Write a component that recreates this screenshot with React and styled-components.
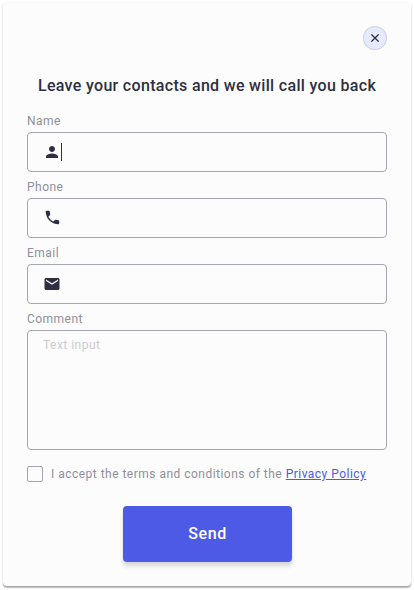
import React from "react";
import styled, { createGlobalStyle } from "styled-components";

const GlobalStyle = createGlobalStyle`
  *, *::before, *::after { box-sizing: border-box; }
  body {
    margin: 0;
    background: #fff;
    font-family: Roboto, sans-serif;
    color: #2e2f42;
  }
`;

const Page = styled.main`
  padding: 2px 3px 4px;
`;

const Modal = styled.section`
  position: relative;
  width: 408px;
  height: 584px;
  padding: 72px 24px 24px;
  border-radius: 4px;
  background: #fcfcfc;
  box-shadow: 0 1px 1px rgba(0, 0, 0, 0.14), 0 1px 3px rgba(0, 0, 0, 0.12),
    0 2px 1px rgba(0, 0, 0, 0.2);
`;

const CloseButton = styled.button`
  position: absolute;
  top: 24px;
  right: 24px;
  display: flex;
  align-items: center;
  justify-content: center;
  width: 24px;
  height: 24px;
  padding: 0;
  border: 1px solid rgba(0, 0, 0, 0.1);
  border-radius: 50%;
  background: #e7e9fc;
  color: #2e2f42;
`;

const Title = styled.h2`
  margin: 0 0 16px;
  font-size: 16px;
  font-weight: 500;
  line-height: 24px;
  letter-spacing: 0.02em;
  text-align: center;
  white-space: nowrap;
`;

const Form = styled.form`
  display: flex;
  flex-direction: column;
`;

const Field = styled.label`
  display: flex;
  flex-direction: column;
  gap: 4px;
  margin-bottom: ${({ $last }) => ($last ? "16px" : "8px")};
`;

const LabelText = styled.span`
  font-size: 12px;
  line-height: 14px;
  letter-spacing: 0.04em;
  color: #8e8f99;
`;

const InputBox = styled.span`
  display: flex;
  align-items: center;
  height: 40px;
  padding: 0 15px;
  border: 1px solid #a5a6af;
  border-radius: 4px;
`;

const FieldIcon = styled.svg`
  flex: none;
  width: 18px;
  height: 18px;
  fill: #2e2f42;
`;

const Caret = styled.span`
  width: 1px;
  height: 18px;
  background: #2e2f42;
`;

const Input = styled.input`
  flex: 1;
  min-width: 0;
  height: 100%;
  padding: 0;
  border: 0;
  outline: 0;
  background: transparent;
  font: 12px Roboto, sans-serif;
  color: #2e2f42;
`;

const TextArea = styled.textarea`
  display: block;
  width: 100%;
  height: 120px;
  padding: 7px 15px;
  border: 1px solid #a5a6af;
  border-radius: 4px;
  outline: 0;
  resize: none;
  background: transparent;
  font: 12px/14px Roboto, sans-serif;
  letter-spacing: 0.04em;
  color: #2e2f42;

  &::placeholder {
    color: #cbcbd0;
    opacity: 1;
  }
`;

const Consent = styled.label`
  display: flex;
  align-items: center;
  gap: 8px;
  height: 16px;
  margin-bottom: 24px;
`;

const Checkbox = styled.input`
  appearance: none;
  width: 16px;
  height: 16px;
  margin: 0;
  border: 1px solid #a5a6af;
  border-radius: 2px;
`;

const PolicyLink = styled.a`
  color: #4d5ae5;
  text-decoration: underline;
`;

const SendButton = styled.button`
  align-self: center;
  width: 169px;
  height: 56px;
  padding: 0 0 0 1px;
  border: 0;
  border-radius: 4px;
  background: #4d5ae5;
  box-shadow: 0 4px 4px rgba(0, 0, 0, 0.15);
  font: 500 16px/24px Roboto, sans-serif;
  letter-spacing: 0.04em;
  color: #fff;
`;

const icons = {
  name: {
    viewBox: "0 0 24 24",
    d: "M12 12c2.21 0 4-1.79 4-4s-1.79-4-4-4-4 1.79-4 4 1.79 4 4 4zm0 2c-2.67 0-8 1.34-8 4v2h16v-2c0-2.66-5.33-4-8-4z",
  },
  phone: {
    viewBox: "-0.6 0.6 24 24",
    d: "M6.62 10.79c1.44 2.83 3.76 5.14 6.59 6.59l2.2-2.2c.27-.27.67-.36 1.02-.24 1.12.37 2.33.57 3.57.57.55 0 1 .45 1 1V20c0 .55-.45 1-1 1C10.61 21 3 13.39 3 4c0-.55.45-1 1-1h3.5c.55 0 1 .45 1 1 0 1.25.2 2.45.57 3.57.11.35.03.74-.25 1.02l-2.2 2.2z",
  },
  email: {
    viewBox: "0 0 24 24",
    d: "M20 4H4c-1.1 0-1.99.9-1.99 2L2 18c0 1.1.9 2 2 2h16c1.1 0 2-.9 2-2V6c0-1.1-.9-2-2-2zm0 4l-8 5-8-5V6l8 5 8-5v2z",
  },
};

const fields = [
  { id: "name", label: "Name", type: "text", active: true },
  { id: "phone", label: "Phone", type: "tel" },
  { id: "email", label: "Email", type: "email" },
];

export default function App() {
  return (
    <Page>
      <GlobalStyle />
      <Modal>
        <CloseButton type="button" aria-label="Close">
          <svg width="8" height="8" viewBox="0 0 8 8" fill="none" stroke="currentColor" strokeWidth="1.3">
            <path d="M.4.4l7.2 7.2M7.6.4L.4 7.6" />
          </svg>
        </CloseButton>
        <Title>Leave your contacts and we will call you back</Title>
        <Form>
          {fields.map(({ id, label, type, active }) => (
            <Field key={id}>
              <LabelText>{label}</LabelText>
              <InputBox>
                <FieldIcon viewBox={icons[id].viewBox} aria-hidden="true">
                  <path d={icons[id].d} />
                </FieldIcon>
                {active && <Caret />}
                <Input type={type} name={id} />
              </InputBox>
            </Field>
          ))}
          <Field $last>
            <LabelText>Comment</LabelText>
            <TextArea name="comment" placeholder="Text input" />
          </Field>
          <Consent>
            <Checkbox type="checkbox" name="consent" />
            <LabelText>
              I accept the terms and conditions of the <PolicyLink href="#">Privacy Policy</PolicyLink>
            </LabelText>
          </Consent>
          <SendButton type="button">Send</SendButton>
        </Form>
      </Modal>
    </Page>
  );
}
